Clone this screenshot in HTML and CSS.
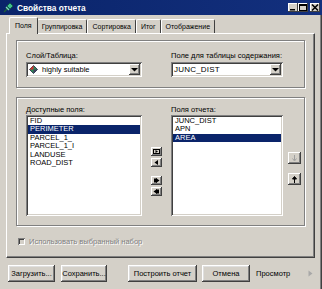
FILE: index.html
```html
<!DOCTYPE html>
<html lang="ru">
<head>
<meta charset="UTF-8">
<title>Свойства отчета</title>
<link rel="stylesheet" href="styles.css">
</head>
<body>

<div class="window">
    <div class="titlebar">
        <svg class="appIcon" width="11" height="11" viewBox="0 0 11 11">
            <path d="M1 10 L5 6" stroke="#1b5e3a" stroke-width="1.4"/>
            <path d="M4 4 L7 1 L10 4 L7 7 Z" fill="#3fbf8f" stroke="#0d5a3a" stroke-width="0.8"/>
            <path d="M3 5 L6 8" stroke="#7be0b8" stroke-width="1.2"/>
        </svg>
        <span class="title">Свойства отчета</span>
        <div class="captionBtns">
            <span class="cbtn"><svg width="8" height="7" viewBox="0 0 8 7"><rect x="1" y="5" width="5" height="1.5" fill="#000"/></svg></span>
            <span class="cbtn"><svg width="8" height="7" viewBox="0 0 8 7"><rect x="0.5" y="0.5" width="7" height="6" fill="none" stroke="#000"/><rect x="0.5" y="0.5" width="7" height="1.5" fill="#000"/></svg></span>
            <span class="cbtn close"><svg width="8" height="7" viewBox="0 0 8 7"><path d="M1 0.5 L7 6.5 M7 0.5 L1 6.5" stroke="#000" stroke-width="1.5"/></svg></span>
        </div>
    </div>

    <div class="tabs">
        <div class="tab active">Поля</div>
        <div class="tab">Группировка</div>
        <div class="tab">Сортировка</div>
        <div class="tab">Итог</div>
        <div class="tab">Отображение</div>
    </div>

    <div class="panel">
        <div class="group groupTop">
            <div class="field">
                <div class="lbl">Слой/Таблица:</div>
                <div class="combo">
                    <svg class="layerIcon" width="9" height="9" viewBox="0 0 9 9">
                        <path d="M4.5 0.5 L8.5 4.5 L4.5 8.5 L0.5 4.5 Z" fill="#2e8b57" stroke="#202040" stroke-width="0.8"/>
                        <path d="M4.5 0.5 L0.5 4.5 L4.5 4.5 Z" fill="#d03030"/>
                        <path d="M4.5 4.5 L8.5 4.5 L4.5 8.5 Z" fill="#404060"/>
                    </svg>
                    <span class="comboText">highly suitable</span>
                    <span class="dropBtn"><svg width="7" height="4" viewBox="0 0 7 4"><path d="M0 0 H7 L3.5 3.5 Z" fill="#000"/></svg></span>
                </div>
            </div>
            <div class="field">
                <div class="lbl">Поле для таблицы содержания:</div>
                <div class="combo">
                    <span class="comboText plain">JUNC_DIST</span>
                    <span class="dropBtn"><svg width="7" height="4" viewBox="0 0 7 4"><path d="M0 0 H7 L3.5 3.5 Z" fill="#000"/></svg></span>
                </div>
            </div>
        </div>

        <div class="group groupFields">
            <div class="col colLeft">
                <div class="lbl">Доступные поля:</div>
                <ul class="listbox">
                    <li>FID</li>
                    <li class="sel">PERIMETER</li>
                    <li>PARCEL_1_</li>
                    <li>PARCEL_1_I</li>
                    <li>LANDUSE</li>
                    <li>ROAD_DIST</li>
                </ul>
            </div>
            <div class="col colMove">
                <span class="sbtn"><svg width="7" height="5" viewBox="0 0 7 5"><rect x="0.5" y="0.5" width="6" height="4" fill="none" stroke="#000"/><path d="M2.5 1 L5 2.5 L2.5 4 Z" fill="#000"/></svg></span>
                <span class="sbtn"><svg width="7" height="5" viewBox="0 0 7 5"><path d="M5 0 L1.5 2.5 L5 5 Z" fill="#000"/></svg></span>
                <span class="sbtn gapTop"><svg width="7" height="5" viewBox="0 0 7 5"><rect x="1" y="0.5" width="3" height="4" fill="#000"/><path d="M3 0 L6.5 2.5 L3 5 Z" fill="#000"/></svg></span>
                <span class="sbtn"><svg width="7" height="5" viewBox="0 0 7 5"><path d="M4 0 L0.5 2.5 L4 5 Z" fill="#000"/><rect x="3" y="0.5" width="3" height="4" fill="#000"/></svg></span>
            </div>
            <div class="col colRight">
                <div class="lbl">Поля отчета:</div>
                <ul class="listbox">
                    <li>JUNC_DIST</li>
                    <li>APN</li>
                    <li class="sel">AREA</li>
                </ul>
            </div>
            <div class="col colOrder">
                <span class="obtn disabled"><svg width="5" height="7" viewBox="0 0 5 7"><path d="M2.5 0 V5 M0.5 3.5 L2.5 6 L4.5 3.5" stroke="#a0a0a0" fill="none"/></svg></span>
                <span class="obtn"><svg width="5" height="7" viewBox="0 0 5 7"><path d="M2.5 7 V2 M0.5 3 L2.5 0.5 L4.5 3 Z" stroke="#000" fill="#000"/></svg></span>
            </div>
        </div>

        <div class="check">
            <span class="box"></span>
            <span class="checkText">Использовать выбранный набор</span>
        </div>
    </div>

    <div class="actions">
        <button class="btn wLoad">Загрузить...</button>
        <button class="btn wSave">Сохранить...</button>
        <button class="btn wBuild">Построить отчет</button>
        <button class="btn wCancel">Отмена</button>
        <span class="preview">Просмотр</span>
        <span class="previewArrow"><svg width="5" height="7" viewBox="0 0 5 7"><path d="M0.5 0.5 L4.5 3.5 L0.5 6.5 Z" fill="#a8a8a8"/></svg></span>
    </div>
</div>

</body>
</html>
```

FILE: styles.css
```css
body {
    margin: 0;
    padding: 0;
    background-color: #d4d0c8;
    font-family: "Liberation Sans", Arial, sans-serif;
    font-size: 7.5px;
    color: #000;
}
.window {
    width: 322px;
    height: 289px;
    background-color: #d4d0c8;
    overflow: hidden;
    box-shadow: inset -1px 0 #404040, inset -2px 0 #808080;
}
.titlebar {
    height: 15px;
    display: flex;
    align-items: center;
    padding: 0 2px 0 3px;
    background: linear-gradient(to right, #0a246a, #13307e);
    color: #fff;
}
.appIcon {
    margin-right: 3px;
}
.title {
    font-weight: bold;
    font-size: 8.3px;
}
.captionBtns {
    margin-left: auto;
    display: flex;
}
.cbtn {
    width: 10px;
    height: 9px;
    display: flex;
    align-items: center;
    justify-content: center;
    background-color: #d4d0c8;
    box-shadow: inset -1px -1px #404040, inset 1px 1px #fff;
}
.cbtn.close {
    margin-left: 2px;
}

/* tabs */
.tabs {
    display: flex;
    align-items: flex-end;
    height: 16px;
    margin-top: 2px;
    padding-left: 10px;
}
.tab {
    height: 14px;
    line-height: 14px;
    padding: 0 4px;
    font-size: 7px;
    border-left: 1px solid #fff;
    border-top: 1px solid #fff;
    border-right: 1px solid #404040;
    box-sizing: border-box;
    border-radius: 2px 2px 0 0;
    white-space: nowrap;
}
.tab.active {
    height: 17px;
    line-height: 15px;
    padding: 0 5px;
    margin-left: -1px;
    margin-right: -1px;
    margin-bottom: -1px;
    position: relative;
    z-index: 1;
    background-color: #d4d0c8;
}

/* panel */
.panel {
    width: 309px;
    height: 225px;
    margin-left: 6px;
    box-sizing: border-box;
    padding: 6px 9px 0 9px;
    border-left: 1px solid #fff;
    border-top: 1px solid #fff;
    border-right: 1px solid #404040;
    border-bottom: 1px solid #404040;
    box-shadow: inset -1px -1px #808080;
}
.group {
    border: 1px solid #808080;
    box-shadow: inset 1px 1px #fff, 1px 1px #fff;
    box-sizing: border-box;
    width: 289px;
}
.lbl {
    height: 9px;
    line-height: 9px;
    white-space: nowrap;
}
.groupTop {
    height: 48px;
    padding: 10px 0 0 9px;
    display: grid;
    grid-template-columns: 116px 112px;
    column-gap: 29px;
}
.groupTop .lbl {
    margin-bottom: 2px;
}
.combo {
    height: 15px;
    display: flex;
    align-items: center;
    background-color: #fff;
    box-shadow: inset 1px 1px #808080, inset -1px -1px #fff, inset 2px 2px #404040, inset -2px -2px #d4d0c8;
    padding: 0 2px 0 3px;
}
.layerIcon {
    margin-right: 4px;
}
.comboText.plain {
    font-size: 8px;
    letter-spacing: 0.2px;
}
.dropBtn {
    margin-left: auto;
    width: 11px;
    height: 11px;
    display: flex;
    align-items: center;
    justify-content: center;
    background-color: #d4d0c8;
    box-shadow: inset -1px -1px #404040, inset 1px 1px #fff, inset -2px -2px #808080;
}

.groupFields {
    height: 129px;
    margin-top: 9px;
    padding: 7px 0 0 9px;
    display: flex;
}
.col {
    display: flex;
    flex-direction: column;
}
.colLeft {
    width: 116px;
}
.colRight {
    width: 112px;
    margin-left: 9px;
}
.listbox {
    list-style: none;
    margin: 1px 0 0 0;
    padding: 2px;
    height: 101px;
    box-sizing: border-box;
    background-color: #fff;
    box-shadow: inset 1px 1px #808080, inset -1px -1px #fff, inset 2px 2px #404040, inset -2px -2px #d4d0c8;
}
.listbox li {
    height: 8.4px;
    line-height: 8.4px;
    padding-left: 2px;
}
.listbox li.sel {
    background-color: #0a246a;
    color: #fff;
}
.colMove {
    margin-left: 9px;
    padding-top: 42px;
}
.sbtn, .obtn {
    display: flex;
    align-items: center;
    justify-content: center;
    background-color: #d4d0c8;
    box-shadow: inset -1px -1px #404040, inset 1px 1px #fff, inset -2px -2px #808080;
}
.sbtn {
    width: 11px;
    height: 9px;
    margin-bottom: 2px;
}
.sbtn.gapTop {
    margin-top: 7px;
}
.colOrder {
    margin-left: 5px;
    padding-top: 47px;
}
.obtn {
    width: 13px;
    height: 12px;
    margin-bottom: 9px;
}

.check {
    display: flex;
    align-items: center;
    margin-top: 11px;
    padding-left: 2px;
    height: 9px;
    color: #808080;
    text-shadow: 1px 1px 0 #fff;
}
.box {
    width: 7px;
    height: 7px;
    margin-right: 4px;
    background-color: #d4d0c8;
    box-shadow: inset 1px 1px #808080, inset -1px -1px #fff, inset 2px 2px #404040;
}

/* bottom buttons */
.actions {
    display: flex;
    align-items: center;
    margin-top: 7px;
    padding-left: 8px;
}
.btn {
    height: 17px;
    margin: 0;
    padding: 0;
    border: none;
    font-family: inherit;
    font-size: 7.5px;
    color: #000;
    background-color: #d4d0c8;
    box-shadow: inset -1px -1px #404040, inset 1px 1px #fff, inset -2px -2px #808080, inset 2px 2px #dfdfdf;
}
.wLoad {
    width: 47px;
}
.wSave {
    width: 46px;
    margin-left: 6px;
}
.wBuild {
    width: 69px;
    margin-left: 21px;
}
.wCancel {
    width: 48px;
    margin-left: 5px;
}
.preview {
    margin-left: 6px;
}
.previewArrow {
    margin-left: auto;
    margin-right: 9px;
    display: flex;
}
```
